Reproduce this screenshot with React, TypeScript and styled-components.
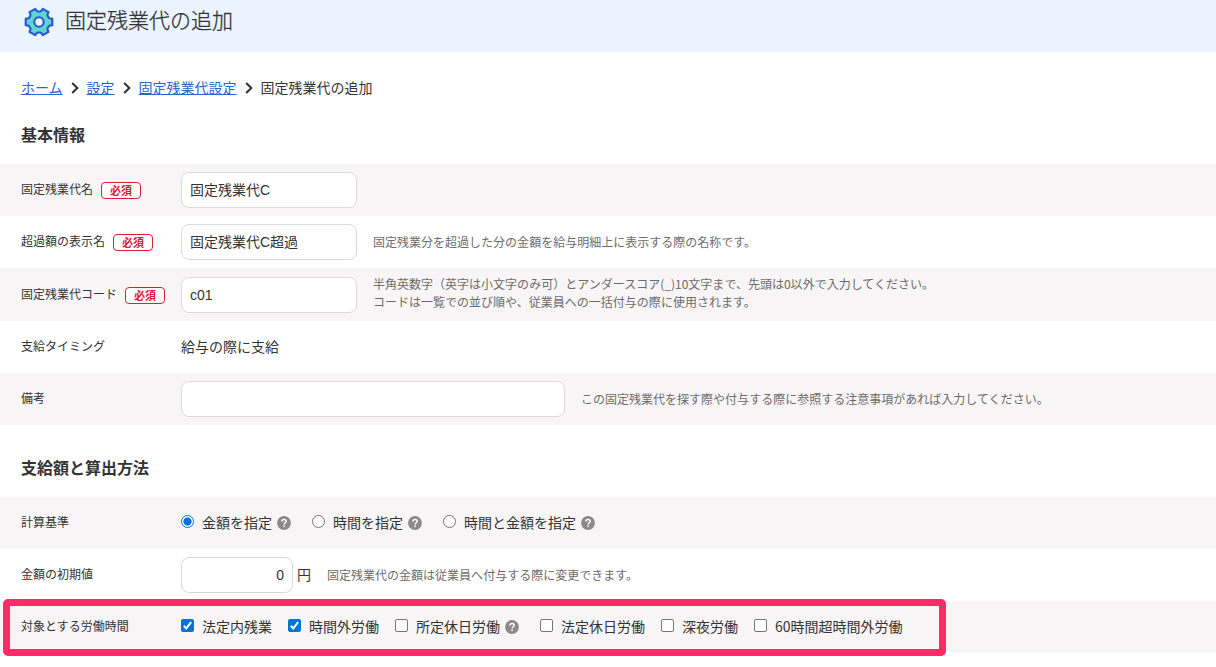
import React from "react";
import styled, { createGlobalStyle } from "styled-components";

const GlobalStyle = createGlobalStyle`
  * { box-sizing: border-box; }
  body {
    margin: 0;
    background: #fff;
    color: #333;
    font-family: "Noto Sans CJK JP", sans-serif;
    font-size: 14px;
    overflow: hidden;
  }
`;

const Page = styled.div`
  min-height: 667px;
  display: flex;
  flex-direction: column;
`;

const Header = styled.header`
  height: 52px;
  display: flex;
  align-items: flex-start;
  gap: 10px;
  padding: 6px 0 0 23px;
  background: #ebf3ff;
`;

const Title = styled.h1`
  margin: -1px 0 0;
  font-size: 21px;
  font-weight: 300;
  line-height: 28px;
  -webkit-text-stroke: 0.3px #333;
`;

const Breadcrumb = styled.nav`
  display: flex;
  align-items: center;
  height: 24px;
  margin: 23px 0 0 21px;
  line-height: 24px;
`;

const Crumb = styled.a`
  color: #2864d2;
  text-decoration: underline;
  text-underline-offset: 1px;
`;

const Separator = styled.svg`
  width: 24px;
  height: 14px;
  margin-top: 2px;
`;

const SectionTitle = styled.h2<{ $top: number }>`
  margin: ${(p) => p.$top}px 0 18px 21px;
  height: 24px;
  font-size: 16px;
  font-weight: 700;
  line-height: 24px;
`;

const Row = styled.div<{ $shaded?: boolean; $height?: number }>`
  position: relative;
  display: grid;
  grid-template-columns: 160px 1fr;
  align-items: center;
  height: ${(p) => p.$height ?? 52}px;
  padding-left: 21px;
  background: ${(p) => (p.$shaded ? "#f7f5f6" : "#fff")};
`;

const Label = styled.div`
  display: flex;
  align-items: center;
  gap: 8px;
  padding-bottom: 2px;
  font-size: 12px;
  line-height: 18px;
  white-space: nowrap;
`;

const Required = styled.span`
  width: 40px;
  height: 17px;
  margin: 2px 0 -1px;
  border: 1px solid #dc1e32;
  border-radius: 4px;
  background: #fff;
  color: #dc1e32;
  font-size: 11px;
  font-weight: 700;
  line-height: 14px;
  text-align: center;
`;

const Value = styled.div`
  display: flex;
  align-items: center;
  line-height: 20px;
  white-space: nowrap;
`;

const PlainText = styled.span`
  padding-bottom: 2px;
`;

const TextInput = styled.input<{ $width: number; $align?: "right"; $raised?: boolean }>`
  width: ${(p) => p.$width}px;
  height: 36px;
  padding: 0 8px ${(p) => (p.$raised ? 3 : 0)}px;
  border: 1px solid #dbd9da;
  border-radius: 8px;
  background: #fff;
  color: #333;
  font-family: "Liberation Sans", "Noto Sans CJK JP", sans-serif;
  font-size: 14px;
  text-align: ${(p) => p.$align ?? "left"};
`;

const Unit = styled.span`
  margin-left: 4px;
  padding-bottom: 2px;
`;

const Note = styled.p<{ $raised?: boolean }>`
  margin: 0 0 0 16px;
  padding-bottom: ${(p) => (p.$raised ? 3 : 0)}px;
  color: #6e6b6b;
  font-size: 12px;
  line-height: 18px;
  letter-spacing: 0.01px;
`;

const Options = styled.div`
  display: flex;
  align-items: center;
  gap: 16px;
  white-space: nowrap;
`;

const Option = styled.label`
  display: flex;
  align-items: center;
  padding-bottom: 2px;
  line-height: 20px;
`;

const Radio = styled.input.attrs({ type: "radio" })`
  appearance: none;
  width: 13px;
  height: 13px;
  margin: 0 8px 1px 0;
  border: 1px solid #767676;
  border-radius: 50%;
  background: #fff;
  &:checked {
    border-color: #0075d7;
    background: radial-gradient(circle, #0075d7 0 3.8px, #fff 4.4px);
  }
`;

const BoxInput = styled.input.attrs({ type: "checkbox" })`
  appearance: none;
  grid-area: 1 / 1;
  width: 13px;
  height: 13px;
  margin: 0;
  border: 1px solid #767676;
  border-radius: 2px;
  background: #fff;
  &:checked {
    border-color: #0075d7;
    background: #0075d7;
  }
`;

const BoxWrap = styled.span`
  display: grid;
  margin: 0 8px 1px 0;
`;

const Tick = styled.svg`
  grid-area: 1 / 1;
  width: 13px;
  height: 13px;
  pointer-events: none;
`;

const HelpSvg = styled.svg`
  width: 14px;
  height: 14px;
  margin: 2px 5px 0;
`;

const Highlight = styled.div`
  position: absolute;
  left: 3px;
  top: -2px;
  width: 943px;
  height: 57px;
  border: 7px solid #ff2b67;
  border-radius: 5px;
  pointer-events: none;
`;

const GearSvg = styled.svg`
  width: 32px;
  height: 30px;
  margin-top: 1px;
`;

function gearPath(): string {
  const tooth: [number, number][] = [
    [-26, 10.6],
    [-19, 11.2],
    [-14, 13.7],
    [14, 13.7],
    [19, 11.2],
    [26, 10.6],
  ];
  const points = Array.from({ length: 6 }, (_, i) =>
    tooth.map(([angle, radius]) => {
      const a = ((i * 60 + angle) * Math.PI) / 180;
      return `${(16 + radius * Math.cos(a)).toFixed(2)} ${(15 + radius * Math.sin(a)).toFixed(2)}`;
    })
  ).flat();
  return `M${points.join("L")}Z`;
}

const Gear = () => (
  <GearSvg viewBox="0 0 32 30" fill="#62d2d2" stroke="#2559cb" strokeWidth="2.1" strokeLinejoin="round">
    <path d={gearPath()} />
    <circle cx="16" cy="15" r="4.7" fill="#ebf3ff" />
  </GearSvg>
);

const Chevron = () => (
  <Separator viewBox="0 0 24 14" fill="none" stroke="#333" strokeWidth="2.1">
    <path d="M9.2 1.9L14.3 7L9.2 12.1" />
  </Separator>
);

const Help = () => (
  <HelpSvg viewBox="0 0 14 14">
    <circle cx="7" cy="7" r="6.9" fill="#8c8989" />
    <path d="M4.9 5.5C4.9 4.1 5.8 3.4 7.05 3.4S9.2 4.2 9.2 5.3C9.2 6.7 7.1 6.8 7.1 8.5" fill="none" stroke="#fff" strokeWidth="1.5" />
    <rect x="6.3" y="9.5" width="1.6" height="1.6" fill="#fff" />
  </HelpSvg>
);

const bases = ["金額を指定", "時間を指定", "時間と金額を指定"];

const hours = [
  { name: "法定内残業", checked: true },
  { name: "時間外労働", checked: true },
  { name: "所定休日労働", help: true },
  { name: "法定休日労働" },
  { name: "深夜労働" },
  { name: "60時間超時間外労働" },
];

export default function App() {
  return (
    <>
      <GlobalStyle />
      <Page>
        <Header>
          <Gear />
          <Title>固定残業代の追加</Title>
        </Header>
        <Breadcrumb>
          <Crumb href="#">ホーム</Crumb>
          <Chevron />
          <Crumb href="#">設定</Crumb>
          <Chevron />
          <Crumb href="#">固定残業代設定</Crumb>
          <Chevron />
          <span>固定残業代の追加</span>
        </Breadcrumb>

        <SectionTitle $top={23}>基本情報</SectionTitle>
        <Row $shaded>
          <Label>固定残業代名<Required>必須</Required></Label>
          <Value><TextInput $width={176} $raised defaultValue="固定残業代C" /></Value>
        </Row>
        <Row>
          <Label>超過額の表示名<Required>必須</Required></Label>
          <Value>
            <TextInput $width={176} $raised defaultValue="固定残業代C超過" />
            <Note>固定残業分を超過した分の金額を給与明細上に表示する際の名称です。</Note>
          </Value>
        </Row>
        <Row $shaded $height={53}>
          <Label>固定残業代コード<Required>必須</Required></Label>
          <Value>
            <TextInput $width={176} defaultValue="c01" />
            <Note $raised>
              半角英数字（英字は小文字のみ可）とアンダースコア(_)10文字まで、先頭は0以外で入力してください。
              <br />
              コードは一覧での並び順や、従業員への一括付与の際に使用されます。
            </Note>
          </Value>
        </Row>
        <Row>
          <Label>支給タイミング</Label>
          <Value><PlainText>給与の際に支給</PlainText></Value>
        </Row>
        <Row $shaded>
          <Label>備考</Label>
          <Value>
            <TextInput $width={384} />
            <Note>この固定残業代を探す際や付与する際に参照する注意事項があれば入力してください。</Note>
          </Value>
        </Row>

        <SectionTitle $top={30}>支給額と算出方法</SectionTitle>
        <Row $shaded>
          <Label>計算基準</Label>
          <Options>
            {bases.map((name, i) => (
              <Option key={name}>
                <Radio name="basis" defaultChecked={i === 0} />
                {name}
                <Help />
              </Option>
            ))}
          </Options>
        </Row>
        <Row>
          <Label>金額の初期値</Label>
          <Value>
            <TextInput $width={112} $align="right" defaultValue="0" />
            <Unit>円</Unit>
            <Note>固定残業代の金額は従業員へ付与する際に変更できます。</Note>
          </Value>
        </Row>
        <Row $shaded>
          <Label>対象とする労働時間</Label>
          <Options>
            {hours.map((item) => (
              <Option key={item.name}>
                <BoxWrap>
                  <BoxInput defaultChecked={item.checked} />
                  {item.checked && (
                    <Tick viewBox="0 0 13 13" fill="none" stroke="#fff" strokeWidth="2">
                      <path d="M2.8 6.8L5.2 9.4L10.2 3.2" />
                    </Tick>
                  )}
                </BoxWrap>
                {item.name}
                {item.help && <Help />}
              </Option>
            ))}
          </Options>
          <Highlight />
        </Row>
      </Page>
    </>
  );
}
